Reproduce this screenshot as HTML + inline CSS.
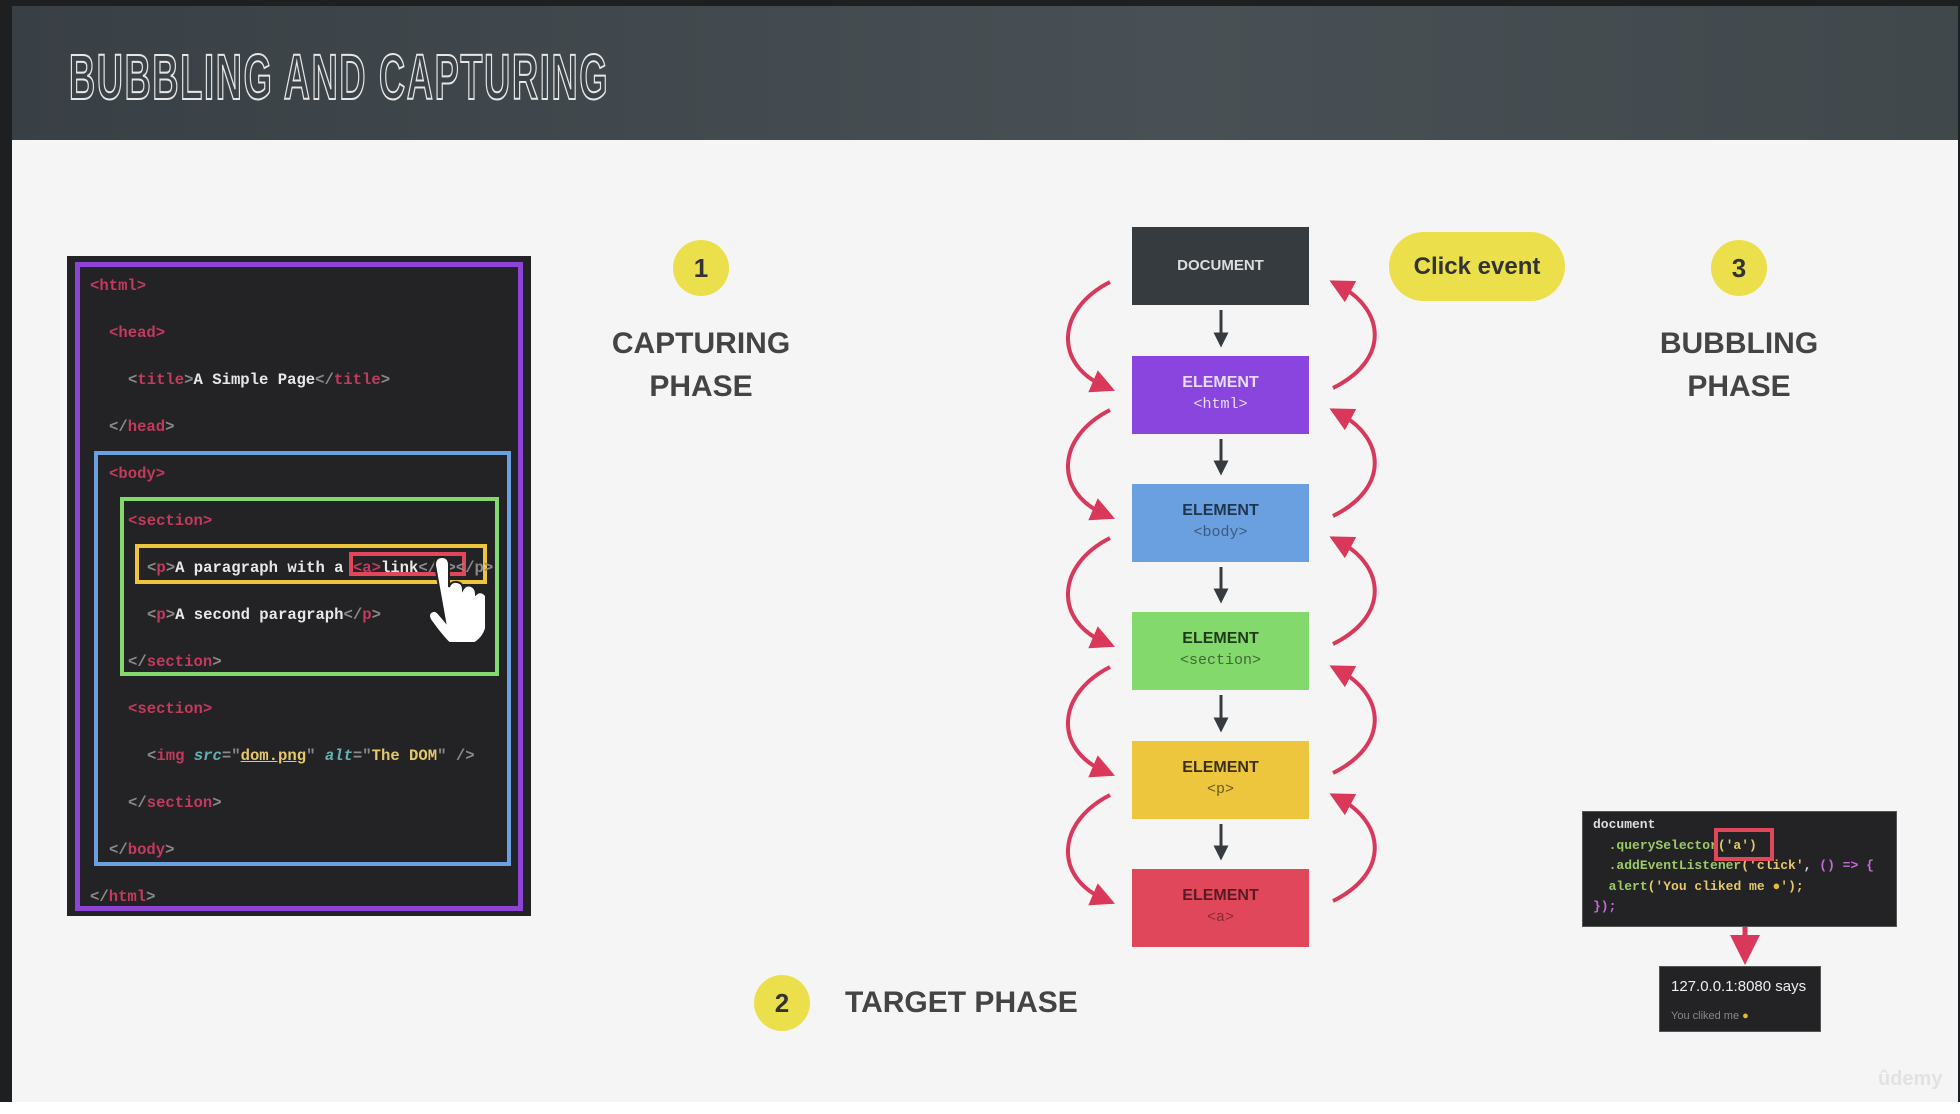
<!DOCTYPE html>
<html><head><meta charset="utf-8"><style>
*{margin:0;padding:0;box-sizing:border-box}
body{width:1960px;height:1114px;background:#1e1f21;position:relative;overflow:hidden;font-family:"Liberation Sans",sans-serif}
.abs{position:absolute}
#hdr{left:12px;top:6px;width:1946px;height:134px;background:linear-gradient(90deg,#394045,#485055 60%,#40484c)}
#title{left:69px;top:40px;font-size:64px;font-weight:bold;color:#3c4348;-webkit-text-stroke:2px #e6e6e6;transform:scaleX(0.565);transform-origin:left top;letter-spacing:3px;white-space:nowrap}
#main{left:12px;top:140px;width:1946px;height:962px;background:#f5f5f5}
#bot{left:0;top:1102px;width:1960px;height:12px;background:#fff}
.code{background:#232325;font-family:"Liberation Mono",monospace;font-weight:bold}
.ln{position:absolute;font-family:"Liberation Mono",monospace;font-weight:bold;font-size:15.6px;color:#e8e8e8;white-space:nowrap;line-height:20px}
.t{color:#c23a5e}.g{color:#8a8a8a}
.circ{width:56px;height:56px;border-radius:50%;background:#ebe04c;color:#333;font-weight:bold;font-size:26px;text-align:center;line-height:56px}
.ph{font-weight:bold;font-size:30px;color:#444;text-align:center;line-height:43px}
.box{position:absolute;left:1132px;width:177px;height:78px;text-align:center;font-weight:bold}
.box .a{font-size:16px;margin-top:18px}
.box .b{font-family:"Liberation Mono",monospace;font-size:15px;margin-top:4px;font-weight:normal}
</style></head><body>
<div id="hdr" class="abs"></div>
<div id="title" class="abs">BUBBLING AND CAPTURING</div>
<div id="main" class="abs"></div>
<div id="bot" class="abs"></div>

<div class="abs code" style="left:67px;top:256px;width:464px;height:660px"></div>
<div class="abs" style="left:75px;top:262px;width:448px;height:649px;border:5px solid #8d44d6"></div>
<div class="abs" style="left:94px;top:451px;width:417px;height:415px;border:4px solid #6a9fe0"></div>
<div class="abs" style="left:120px;top:497px;width:379px;height:179px;border:4px solid #84d96d"></div>
<div class="abs" style="left:135px;top:544px;width:352px;height:40px;border:4px solid #eec63d"></div>
<div class="abs" style="left:349px;top:552px;width:117px;height:24px;border:4px solid #e0475b"></div>
<div class="ln" style="left:90px;top:276px"><span class="t">&lt;html&gt;</span></div>
<div class="ln" style="left:109px;top:323px"><span class="t">&lt;head&gt;</span></div>
<div class="ln" style="left:128px;top:370px"><span class="g">&lt;</span><span class="t">title</span><span class="g">&gt;</span>A Simple Page<span class="g">&lt;/</span><span class="t">title</span><span class="g">&gt;</span></div>
<div class="ln" style="left:109px;top:417px"><span class="g">&lt;/</span><span class="t">head</span><span class="g">&gt;</span></div>
<div class="ln" style="left:109px;top:464px"><span class="t">&lt;body&gt;</span></div>
<div class="ln" style="left:128px;top:511px"><span class="t">&lt;section&gt;</span></div>
<div class="ln" style="left:147px;top:558px"><span class="g">&lt;</span><span class="t">p</span><span class="g">&gt;</span>A paragraph with a <span class="t">&lt;a&gt;</span>link<span class="g">&lt;/a&gt;&lt;/p&gt;</span></div>
<div class="ln" style="left:147px;top:605px"><span class="g">&lt;</span><span class="t">p</span><span class="g">&gt;</span>A second paragraph<span class="g">&lt;/</span><span class="t">p</span><span class="g">&gt;</span></div>
<div class="ln" style="left:128px;top:652px"><span class="g">&lt;/</span><span class="t">section</span><span class="g">&gt;</span></div>
<div class="ln" style="left:128px;top:699px"><span class="t">&lt;section&gt;</span></div>
<div class="ln" style="left:147px;top:746px"><span class="g">&lt;</span><span class="t">img</span> <span style="color:#5fb3b3;font-style:italic">src</span><span class="g">="</span><span style="color:#e4c86a;text-decoration:underline">dom.png</span><span class="g">"</span> <span style="color:#5fb3b3;font-style:italic">alt</span><span class="g">="</span><span style="color:#e4c86a">The DOM</span><span class="g">" /&gt;</span></div>
<div class="ln" style="left:128px;top:793px"><span class="g">&lt;/</span><span class="t">section</span><span class="g">&gt;</span></div>
<div class="ln" style="left:109px;top:840px"><span class="g">&lt;/</span><span class="t">body</span><span class="g">&gt;</span></div>
<div class="ln" style="left:90px;top:887px"><span class="g">&lt;/</span><span class="t">html</span><span class="g">&gt;</span></div>
<svg class="abs" style="left:415px;top:555px" width="70" height="90" viewBox="0 0 70 90"><path d="M20 10 q0-8 7-8 q7 0 7 8 v22 q2-6 8-5 q6 1 6 7 q3-5 8-3 q5 2 5 8 q3-3 7-1 q4 2 4 8 v20 q0 14-12 22 h-26 q-8-8-18-22 q-4-6 0-9 q4-3 8 2 l6 7z" fill="#fff" stroke="#222" stroke-width="2"/></svg>

<div class="abs circ" style="left:673px;top:240px">1</div>
<div class="abs ph" style="left:581px;top:322px;width:240px">CAPTURING<br>PHASE</div>
<div class="abs circ" style="left:1711px;top:240px">3</div>
<div class="abs ph" style="left:1619px;top:322px;width:240px">BUBBLING<br>PHASE</div>
<div class="abs" style="left:1389px;top:232px;width:176px;height:69px;border-radius:35px;background:#ebe04c;color:#333;font-weight:bold;font-size:24px;text-align:center;line-height:69px">Click event</div>
<div class="abs circ" style="left:754px;top:975px">2</div>
<div class="abs" style="left:845px;top:986px;font-weight:bold;font-size:30px;color:#444">TARGET PHASE</div>

<div class="box" style="top:227px;background:#363b3f;color:#ddd"><div class="a" style="margin-top:30px;font-size:15px">DOCUMENT</div></div>
<div class="box" style="top:356px;background:#8a45de;color:#e6dcf5"><div class="a">ELEMENT</div><div class="b">&lt;html&gt;</div></div>
<div class="box" style="top:484px;background:#6a9fe0;color:#1f3550"><div class="a">ELEMENT</div><div class="b" style="color:#3d5a80">&lt;body&gt;</div></div>
<div class="box" style="top:612px;background:#84d96d;color:#1f3a1a"><div class="a">ELEMENT</div><div class="b" style="color:#3d6a33">&lt;section&gt;</div></div>
<div class="box" style="top:741px;background:#eec63d;color:#3a3010"><div class="a">ELEMENT</div><div class="b" style="color:#6a5a20">&lt;p&gt;</div></div>
<div class="box" style="top:869px;background:#e0475b;color:#5a1a22"><div class="a">ELEMENT</div><div class="b" style="color:#8a2a35">&lt;a&gt;</div></div>

<svg class="abs" style="left:0;top:0" width="1960" height="1114">
<defs>
<marker id="ah" markerWidth="6" markerHeight="6" refX="3" refY="3" orient="auto" markerUnits="strokeWidth"><path d="M0,0 L6,3 L0,6z" fill="#d9385a"/></marker>
<marker id="dk" markerWidth="5" markerHeight="5" refX="2.5" refY="2.5" orient="auto" markerUnits="strokeWidth"><path d="M0,0 L5,2.5 L0,5z" fill="#363b3f"/></marker>
</defs>
<g stroke="#363b3f" stroke-width="3" fill="none" marker-end="url(#dk)">
<path d="M1221 310 V340"/><path d="M1221 439 V468"/><path d="M1221 567 V596"/><path d="M1221 695 V725"/><path d="M1221 824 V853"/>
</g>
<g stroke="#d9385a" stroke-width="4" fill="none" marker-end="url(#ah)">
<path d="M1110 282 C1055 310 1055 365 1104 386"/>
<path d="M1110 410 C1055 438 1055 493 1104 514"/>
<path d="M1110 538 C1055 566 1055 621 1104 642"/>
<path d="M1110 667 C1055 695 1055 750 1104 771"/>
<path d="M1110 795 C1055 823 1055 878 1104 899"/>
<path d="M1333 388 C1390 360 1385 310 1340 286"/>
<path d="M1333 516 C1390 488 1385 438 1340 414"/>
<path d="M1333 644 C1390 616 1385 566 1340 542"/>
<path d="M1333 773 C1390 745 1385 695 1340 671"/>
<path d="M1333 901 C1390 873 1385 823 1340 799"/>
<path d="M1745 927 V950" stroke-width="5"/>
</g>
</svg>

<div class="abs code" style="left:1582px;top:811px;width:315px;height:116px;border:1px solid #555"></div>
<div class="abs" style="font-family:'Liberation Mono',monospace;font-weight:bold;font-size:13px;line-height:20.5px;left:1593px;top:815px;color:#ddd;white-space:pre">document
  <span style="color:#9ec96a">.querySelector</span><span style="color:#e4c86a">('a')</span>
  <span style="color:#9ec96a">.addEventListener</span><span style="color:#e4c86a">('click'</span>, <span style="color:#c46ad6">() =&gt; {</span>
  <span style="color:#9ec96a">alert</span><span style="color:#e4c86a">('You cliked me </span><span style="color:#e4b83a">●</span><span style="color:#e4c86a">');</span>
<span style="color:#c46ad6">});</span></div>
<div class="abs" style="left:1714px;top:828px;width:60px;height:33px;border:4px solid #e0475b"></div>
<div class="abs" style="left:1659px;top:966px;width:162px;height:66px;background:#232325;border:1px solid #555"></div>
<div class="abs" style="left:1671px;top:978px;font-size:15px;color:#eee">127.0.0.1:8080 says</div>
<div class="abs" style="left:1671px;top:1010px;font-size:11px;color:#888">You cliked me <span style="color:#e4b83a">●</span></div>
<div class="abs" style="left:1878px;top:1068px;font-size:20px;font-weight:bold;color:#e2e2e2">ûdemy</div>
</body></html>
